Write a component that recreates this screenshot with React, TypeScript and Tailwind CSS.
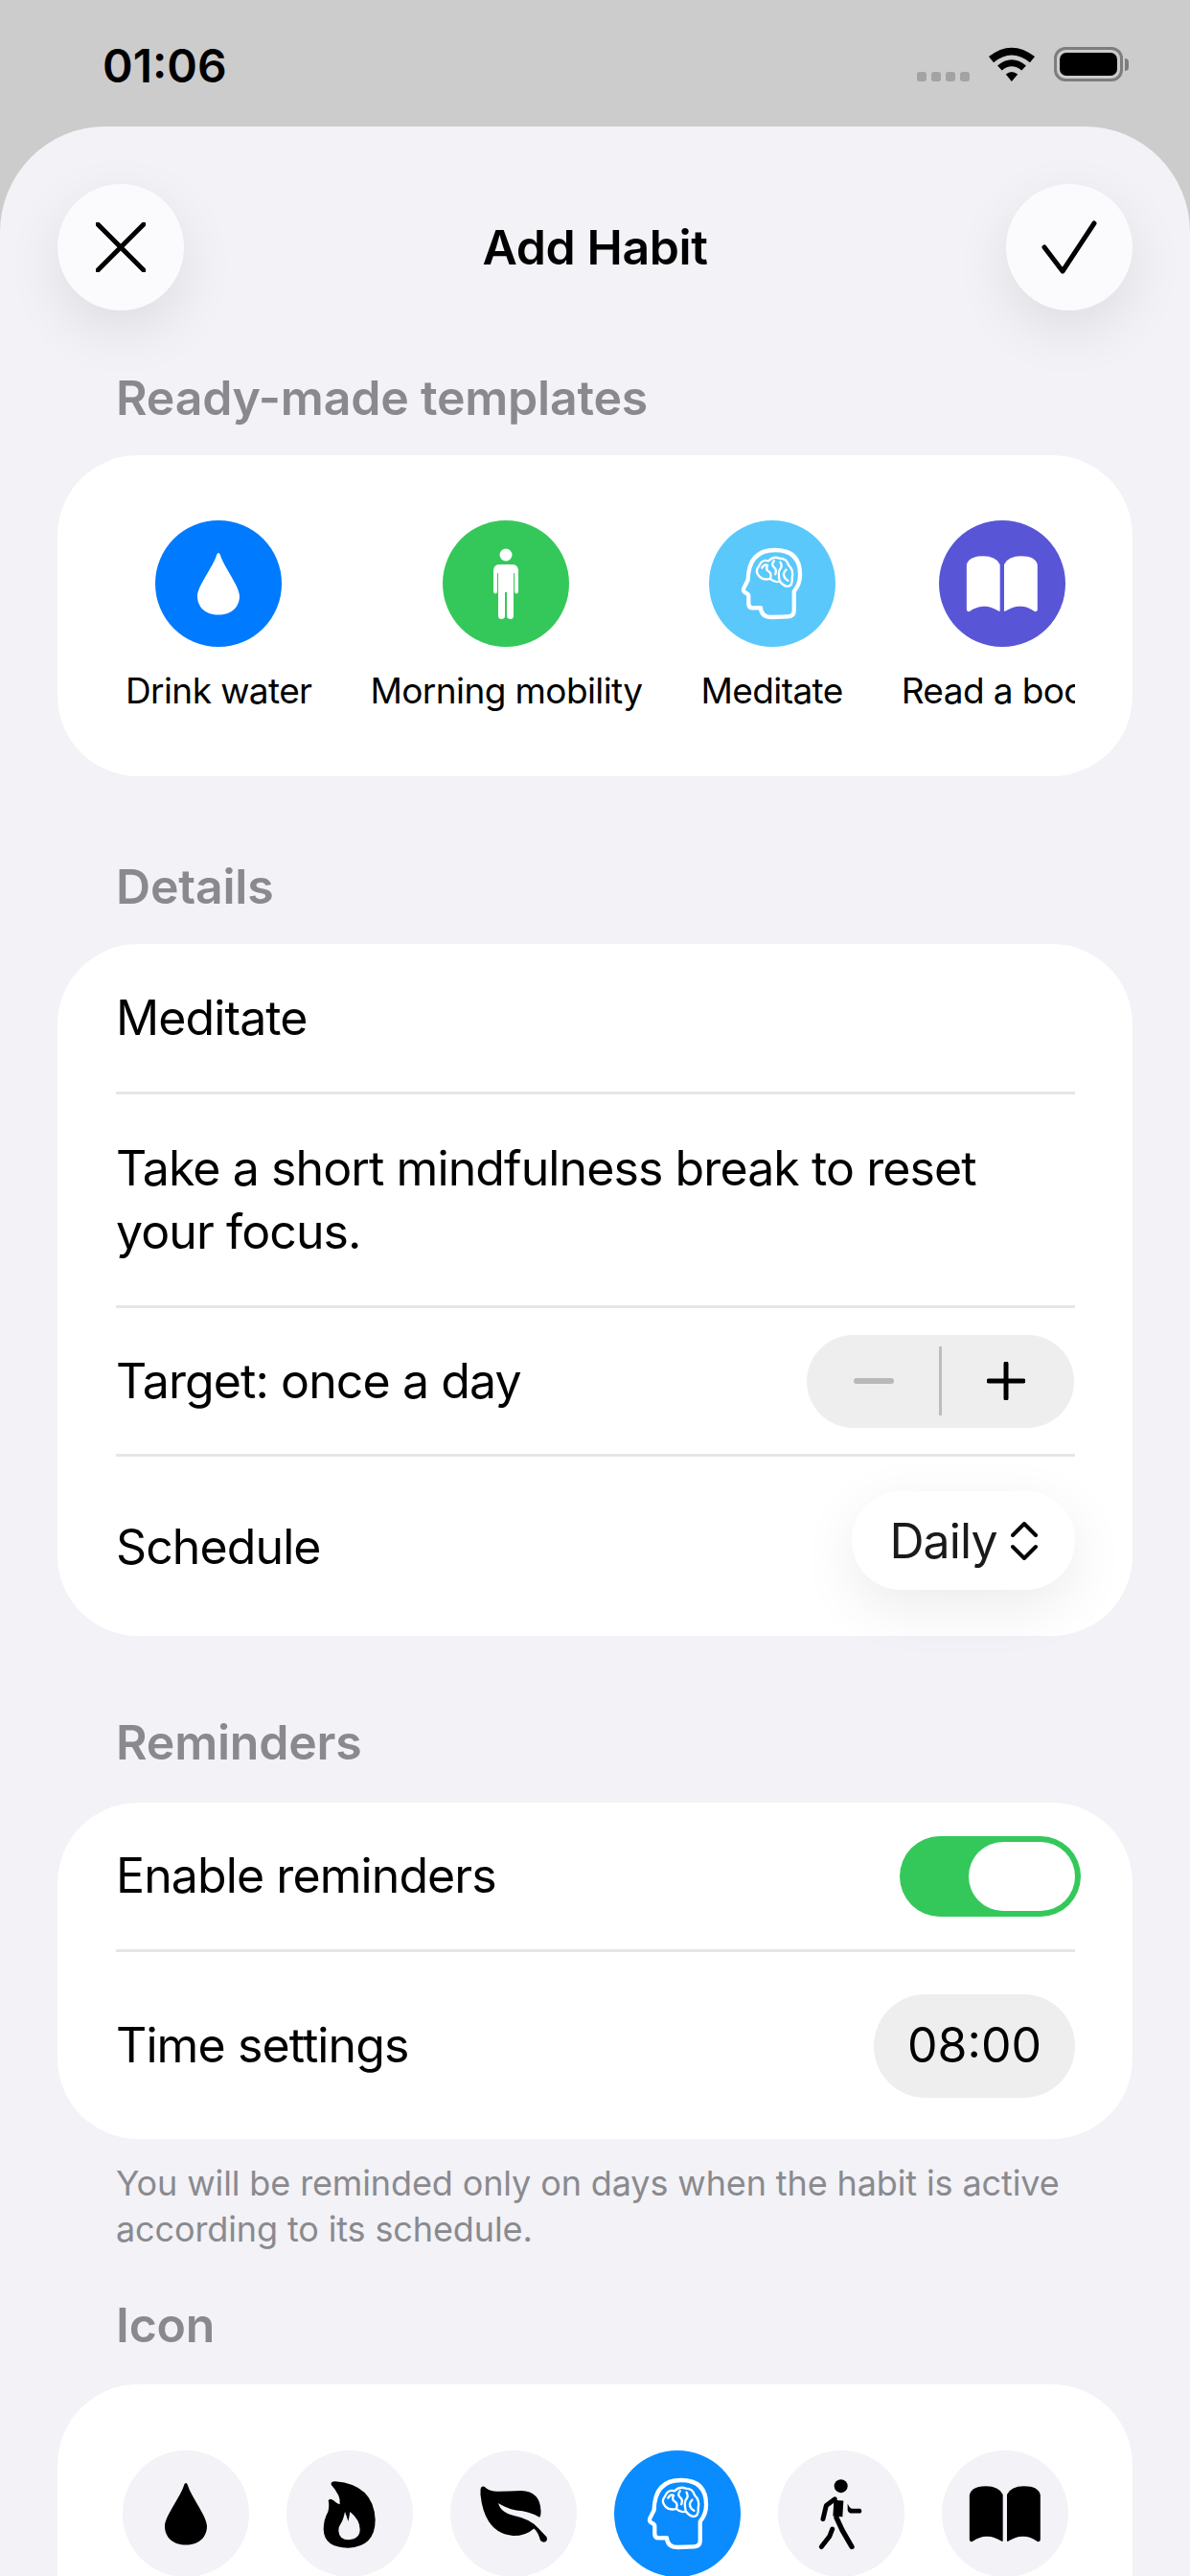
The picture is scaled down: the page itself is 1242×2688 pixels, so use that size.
import type { ReactNode } from "react";

const templates = [
  { label: "Drink water", color: "bg-[#007aff]", icon: <Drop className="h-[66px] w-[46px] text-white" /> },
  { label: "Morning mobility", color: "bg-[#34c85a]", icon: <Person /> },
  { label: "Meditate", color: "bg-[#5ac8fa]", icon: <Brain /> },
  { label: "Read a book", color: "bg-[#5856d6]", icon: <Book className="h-[63px] w-[80px] text-white" /> },
];

function Drop({ className }: { className?: string }) {
  return (
    <svg viewBox="0 0 46 66" className={className} fill="currentColor">
      <path d="M23 1C22 1 21.500 2 21 3.500C18 14 1 36 1 46C1 58 10 65.500 23 65.500C36 65.500 45 58 45 46C45 36 28 14 25 3.500C24.500 2 24 1 23 1Z" />
    </svg>
  );
}

function Person() {
  return (
    <svg viewBox="0 0 30 74" className="h-[74px] w-[30px]" fill="white">
      <circle cx="15" cy="7" r="6.500" />
      <path d="M8 17H22C26 17 28 20 28 24V45C28 46.500 27 47.500 26 47.500C25 47.500 24 46.500 24 45V26H23V71C23 73 21.500 74 20 74C18 74 16 73 16 71V46H14V71C14 73 12.500 74 10.500 74C8.500 74 7 73 7 71V26H6V45C6 46.500 5 47.500 4 47.500C3 47.500 2 46.500 2 45V24C2 20 4 17 8 17Z" />
    </svg>
  );
}

function Brain() {
  return (
    <svg viewBox="215 210 200 235" className="h-[78px] w-[67px]" fill="none" stroke="white" strokeLinecap="round" strokeLinejoin="round">
      <path strokeWidth="13" d="M385 352V412Q385 430 367 431L315 433Q282 433 280 403L255 404Q242 404 242 390V366Q242 360 232 356Q222 350 228 340L240 316Q242 222 325 222Q404 222 404 300Q404 330 385 352Z" />
      <path strokeWidth="7" d="M275 272Q283 250 305 256Q320 240 340 248Q362 248 368 270Q385 285 379 310Q381 338 362 336Q348 332 340 320Q325 326 310 312Q290 318 276 305Q260 290 275 272Z" />
      <path strokeWidth="7" d="M284 278Q292 264 302 270M300 272Q296 285 306 290Q316 296 310 312M322 256Q312 268 322 276Q332 284 326 298M342 260Q350 272 340 284Q334 294 340 320M360 284Q346 296 358 312L366 318" />
    </svg>
  );
}

function Book({ className }: { className?: string }) {
  return (
    <svg viewBox="655 95 240 190" className={className} fill="currentColor">
      <path d="M663 130Q668 102 715 102Q755 102 768 128V272Q768 278 762 274Q738 258 715 260Q695 260 672 276Q663 278 663 270Z" />
      <path d="M886 130Q881 102 834 102Q794 102 781 128V272Q781 278 787 274Q811 258 834 260Q854 260 877 276Q886 278 886 270Z" />
    </svg>
  );
}

function Flame() {
  return (
    <svg viewBox="165 75 180 225" className="h-[75px] w-[60px]" fill="black">
      <path
        fillRule="evenodd"
        d="M197 95Q195 85 210 85Q330 95 335 205Q335 290 250 293Q175 293 173 235Q173 205 187 180Q192 160 188 145Q192 135 205 145Q222 160 224 155Q228 130 197 95ZM240 180Q235 205 228 215Q220 225 220 240Q222 268 252 268Q287 265 287 235Q287 205 256 180Q253 200 250 210Q245 192 240 180Z"
      />
    </svg>
  );
}

function Leaf() {
  return (
    <svg viewBox="655 95 225 190" className="h-[63px] w-[75px]" fill="black">
      <path d="M662 112Q664 100 674 103Q690 120 720 118Q750 118 790 116Q850 118 852 180Q852 195 848 200Q815 180 775 178Q740 170 718 155Q725 185 770 195Q820 205 845 235L870 262Q875 275 862 278Q850 278 848 265Q842 245 830 235Q805 258 765 258Q675 250 662 130Z" />
    </svg>
  );
}

function Walk() {
  return (
    <svg viewBox="190 70 150 230" className="h-[77px] w-[50px]" fill="none" stroke="black" strokeLinecap="round" strokeLinejoin="round">
      <circle cx="264" cy="97" r="21" fill="black" stroke="none" />
      <path strokeWidth="15" d="M245 138L218 158L208 200" />
      <path strokeWidth="30" strokeLinecap="butt" d="M257 142L254 192" />
      <path strokeWidth="16" d="M250 196L268 235L298 287" />
      <path strokeWidth="15" d="M237 232L228 255L203 287" />
      <path fill="black" stroke="none" d="M285 152L285 172Q288 183 300 182L325 182Q333 176 325 168L300 168Q292 168 285 152Z" />
    </svg>
  );
}

function IconCircle({ selected, children }: { selected?: boolean; children: ReactNode }) {
  return (
    <div className={`flex h-[132px] w-[132px] shrink-0 items-center justify-center rounded-full ${selected ? "bg-[#0a8cff]" : "bg-[#f2f2f7]"}`}>
      {children}
    </div>
  );
}

function SectionTitle({ children, className }: { children: ReactNode; className: string }) {
  return <h2 className={`h-[60px] px-[121px] text-[50px] leading-[60px] font-semibold tracking-[-0.2px] text-[#8a8a8e] ${className}`}>{children}</h2>;
}

function Divider() {
  return <div className="mr-[60px] ml-[61px] h-[3px] bg-[#e6e6e8]" />;
}

export default function App() {
  return (
    <div className="h-[2688px] w-[1242px] overflow-hidden bg-[#cccccc] [font-family:Inter,sans-serif] text-black">
      <div className="flex h-[132px] items-start justify-between pt-[41px] pr-[64px] pl-[107px]">
        <span className="text-[48px] leading-[56px] font-semibold tracking-[0px]">01:06</span>
        <div className="mt-[8px] flex items-end">
          <div className="mr-[20px] flex gap-[5px]">
            <span className="h-[10px] w-[10px] rounded-[3px] bg-[#a3a3a3]" />
            <span className="h-[10px] w-[10px] rounded-[3px] bg-[#a3a3a3]" />
            <span className="h-[10px] w-[10px] rounded-[3px] bg-[#a3a3a3]" />
            <span className="h-[10px] w-[10px] rounded-[3px] bg-[#a3a3a3]" />
          </div>
          <svg viewBox="0 0 143 107" className="mr-[20px] h-[36px] w-[48px]" fill="black">
            <path d="M0 30Q71 -26 143 30L128 48Q71 2 15 48Z" />
            <path d="M27 58Q71 20 116 58L102 73Q71 48 41 73Z" />
            <path d="M53 85Q71 70 90 85L71 107Z" />
          </svg>
          <div className="flex items-center">
            <div className="h-[36px] w-[72px] rounded-[12px] border-[3px] border-[#7d7d7d] p-[3px]">
              <div className="h-full w-full rounded-[7px] bg-black" />
            </div>
            <div className="ml-[2px] h-[13px] w-[4px] rounded-r-full bg-[#7d7d7d]" />
          </div>
        </div>
      </div>

      <div className="h-[2556px] overflow-hidden rounded-t-[110px] bg-[#f2f2f7]">
        <div className="flex items-center justify-between px-[60px] pt-[60px]">
          <button className="flex h-[132px] w-[132px] items-center justify-center rounded-full bg-[#fbfbfd] shadow-[0_20px_60px_rgba(0,0,0,0.09)]">
            <svg viewBox="0 0 52 52" className="h-[52px] w-[52px]" fill="none" stroke="black" strokeWidth="5" strokeLinecap="round">
              <path d="M2 2L50 50M50 2L2 50" />
            </svg>
          </button>
          <h1 className="text-[50px] font-semibold tracking-[-0.4px]">Add Habit</h1>
          <button className="flex h-[132px] w-[132px] items-center justify-center rounded-full bg-[#fbfbfd] shadow-[0_20px_60px_rgba(0,0,0,0.09)]">
            <svg viewBox="0 0 58 56" className="h-[56px] w-[58px]" fill="none" stroke="black" strokeWidth="5" strokeLinecap="round" strokeLinejoin="round">
              <path d="M3 28L22 53L55 3" />
            </svg>
          </button>
        </div>

        <SectionTitle className="mt-[61px] mb-[30px]">Ready-made templates</SectionTitle>
        <section className="mx-[60px] h-[335px] rounded-[84px] bg-white px-[61px] pt-[68px]">
          <div className="mr-[-1px] flex gap-[61px] overflow-hidden pl-[10px]">
            {templates.map((t) => (
              <div key={t.label} className="flex shrink-0 flex-col items-center">
                <div className={`flex h-[132px] w-[132px] items-center justify-center rounded-full ${t.color}`}>{t.icon}</div>
                <span className="mt-[24px] text-[37px] leading-[44px] tracking-[-0.6px] whitespace-nowrap">{t.label}</span>
              </div>
            ))}
          </div>
        </section>

        <SectionTitle className="mt-[85px] mb-[30px]">Details</SectionTitle>
        <section className="mx-[60px] h-[722px] rounded-[84px] bg-white text-[50px] leading-[66px] tracking-[-0.9px]">
          <div className="flex h-[154px] items-center px-[61px]">Meditate</div>
          <Divider />
          <div className="flex h-[220px] items-center pr-[60px] pl-[61px]">
            <p>Take a short mindfulness break to reset your focus.</p>
          </div>
          <Divider />
          <div className="flex h-[152px] items-center justify-between pr-[61px] pl-[61px]">
            <span>Target: once a day</span>
            <div className="flex h-[97px] w-[279px] items-center rounded-full bg-[#eeeeef]">
              <div className="flex flex-1 justify-center pl-[3px]">
                <span className="h-[6px] w-[42px] rounded-full bg-[#b8b8b8]" />
              </div>
              <span className="h-[72px] w-[3px] bg-[#bdbdbd]" />
              <div className="flex flex-1 justify-center pr-[4px]">
                <svg viewBox="0 0 40 40" className="h-[40px] w-[40px]" fill="none" stroke="black" strokeWidth="5" strokeLinecap="round">
                  <path d="M20 2V38M2 20H38" />
                </svg>
              </div>
            </div>
          </div>
          <Divider />
          <div className="flex h-[187px] items-center justify-between pr-[60px] pl-[61px]">
            <span>Schedule</span>
            <div className="mb-[12px] flex h-[103px] w-[233px] items-center justify-center gap-[14px] rounded-full bg-white text-[#1a1a1a] shadow-[0_18px_60px_rgba(0,0,0,0.08)]">
              <span>Daily</span>
              <svg viewBox="0 0 28 40" className="h-[40px] w-[28px]" fill="none" stroke="black" strokeWidth="4" strokeLinecap="round" strokeLinejoin="round">
                <path d="M2 14L14 2L26 14M2 26L14 38L26 26" />
              </svg>
            </div>
          </div>
        </section>

        <SectionTitle className="mt-[81px] mb-[33px]">Reminders</SectionTitle>
        <section className="mx-[60px] h-[351px] rounded-[84px] bg-white text-[50px] tracking-[-0.9px]">
          <div className="flex h-[153px] items-center justify-between pr-[54px] pl-[61px]">
            <span>Enable reminders</span>
            <div className="flex h-[84px] w-[189px] items-center justify-end rounded-full bg-[#34c85a] pr-[6px]">
              <div className="h-[72px] w-[111px] rounded-full bg-white" />
            </div>
          </div>
          <Divider />
          <div className="flex h-[195px] items-center justify-between pr-[60px] pl-[61px]">
            <span>Time settings</span>
            <div className="flex h-[108px] w-[210px] items-center justify-center rounded-full bg-[#eeeeef] tracking-[0px]">08:00</div>
          </div>
        </section>
        <p className="mt-[22px] mr-[60px] ml-[121px] text-[36px] leading-[48px] tracking-[-0.12px] text-[#8a8a8e]">
          You will be reminded only on days when the habit is active according to its schedule.
        </p>

        <SectionTitle className="mt-[46px] mb-[32px]">Icon</SectionTitle>
        <section className="mx-[60px] h-[400px] rounded-[84px] bg-white pt-[69px] pl-[68px]">
          <div className="flex gap-[39px]">
            <IconCircle><Drop className="h-[66px] w-[46px] text-black" /></IconCircle>
            <IconCircle><Flame /></IconCircle>
            <IconCircle><Leaf /></IconCircle>
            <IconCircle selected><Brain /></IconCircle>
            <IconCircle><Walk /></IconCircle>
            <IconCircle><Book className="h-[63px] w-[80px] text-black" /></IconCircle>
          </div>
        </section>
      </div>
    </div>
  );
}
